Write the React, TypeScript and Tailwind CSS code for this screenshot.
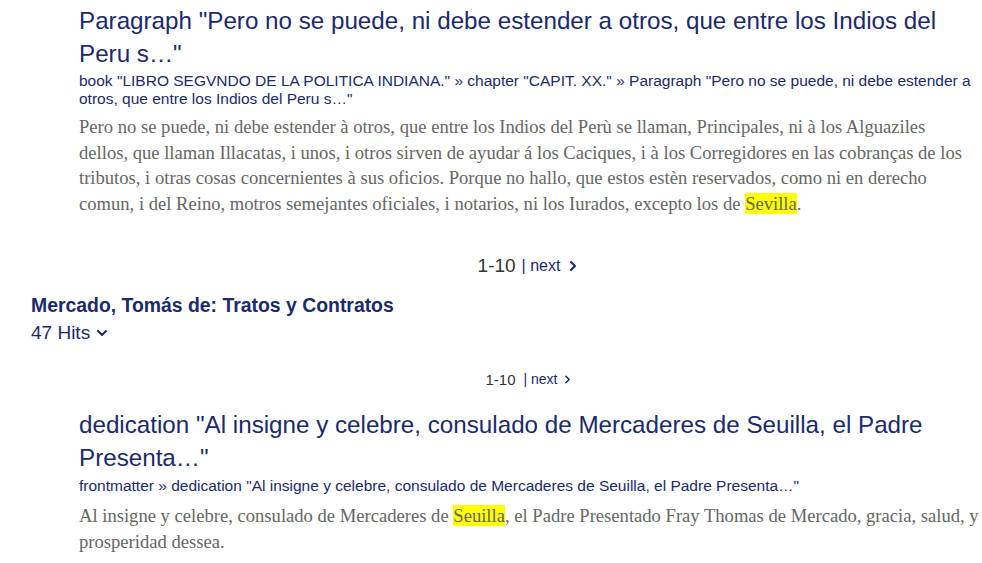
import { ChevronDown, ChevronRight } from "lucide-react";

const sans = { fontFamily: '"Liberation Sans", Arial, sans-serif' };

function Mark({ children }: { children: string }) {
  return <span className="bg-[#ffff00]">{children}</span>;
}

function Hit({ title, crumbs, loose, children }: { title: string; crumbs: string; loose?: boolean; children: React.ReactNode }) {
  return (
    <div className="pl-[79px]">
      <h3 className="text-[24.2px] leading-[33px] text-[#1b2a6b] pr-[2px]" style={sans}>
        {title}
      </h3>
      <div className={loose ? "mt-[3px] text-[15.5px] leading-[18px] text-[#1b2a6b] pr-[2px]" : "mt-[2px] text-[15.5px] leading-[18px] text-[#1b2a6b] pr-[2px]"} style={sans}>
        {crumbs}
      </div>
      <p
        className={loose ? "mt-[8px] text-[18.6px] leading-[25.5px] text-[#666]" : "mt-[6px] pr-[8px] text-[18.6px] leading-[25.5px] text-[#666]"}
        style={{ fontFamily: '"Liberation Serif", "Times New Roman", serif' }}
      >
        {children}
      </p>
    </div>
  );
}

function Pager({ big }: { big?: boolean }) {
  return (
    <div className="pl-[79px] pr-[2px] flex justify-center" style={sans}>
      <div className={big ? "flex items-center text-[19px] text-[#333]" : "flex items-center text-[15px] text-[#333]"}>
        <span>1-10</span>
        <span className={big ? "ml-[6px] text-[16px] text-[#1b2a6b]" : "ml-[8px] text-[14px] text-[#1b2a6b]"}>| next</span>
        <ChevronRight className={big ? "ml-[5px] w-[16px] h-[16px] text-[#1b2a6b]" : "ml-[3px] w-[13px] h-[13px] text-[#1b2a6b]"} strokeWidth={3} />
      </div>
    </div>
  );
}

export default function App() {
  return (
    <div className="w-[982px] h-[563px] overflow-hidden bg-white pt-[4px]">
      <Hit
        title={'Paragraph "Pero no se puede, ni debe estender a otros, que entre los Indios del Peru s…"'}
        crumbs={'book "LIBRO SEGVNDO DE LA POLITICA INDIANA." » chapter "CAPIT. XX." » Paragraph "Pero no se puede, ni debe estender a otros, que entre los Indios del Peru s…"'}
      >
        Pero no se puede, ni debe estender à otros, que entre los Indios del Perù se llaman, Principales, ni à los Alguaziles dellos, que llaman Illacatas, i unos, i otros sirven de ayudar á los Caciques, i à los Corregidores en las cobranças de los tributos, i otras cosas concernientes à sus oficios. Porque no hallo, que estos estèn reservados, como ni en derecho comun, i del Reino, motros semejantes oficiales, i notarios, ni los Iurados, excepto los de <Mark>Sevilla</Mark>.
      </Hit>

      <div className="mt-[36px]">
        <Pager big />
      </div>

      <div className="mt-[11px] pl-[31px]" style={sans}>
        <h2 className="text-[19.4px] leading-[26px] font-bold text-[#1b2a6b]">Mercado, Tomás de: Tratos y Contratos</h2>
        <button className="flex items-center text-[19px] leading-[26px] text-[#1b2a6b] mt-[2px]">
          47 Hits
          <ChevronDown className="ml-[4px] w-[16px] h-[16px]" strokeWidth={3} />
        </button>
      </div>

      <div className="mt-[23px]">
        <Pager />
      </div>

      <div className="mt-[17px]">
        <Hit
          loose
          title={'dedication "Al insigne y celebre, consulado de Mercaderes de Seuilla, el Padre Presenta…"'}
          crumbs={'frontmatter » dedication "Al insigne y celebre, consulado de Mercaderes de Seuilla, el Padre Presenta…"'}
        >
          Al insigne y celebre, consulado de Mercaderes de <Mark>Seuilla</Mark>, el Padre Presentado Fray Thomas de Mercado, gracia, salud, y prosperidad dessea.
        </Hit>
      </div>
    </div>
  );
}
